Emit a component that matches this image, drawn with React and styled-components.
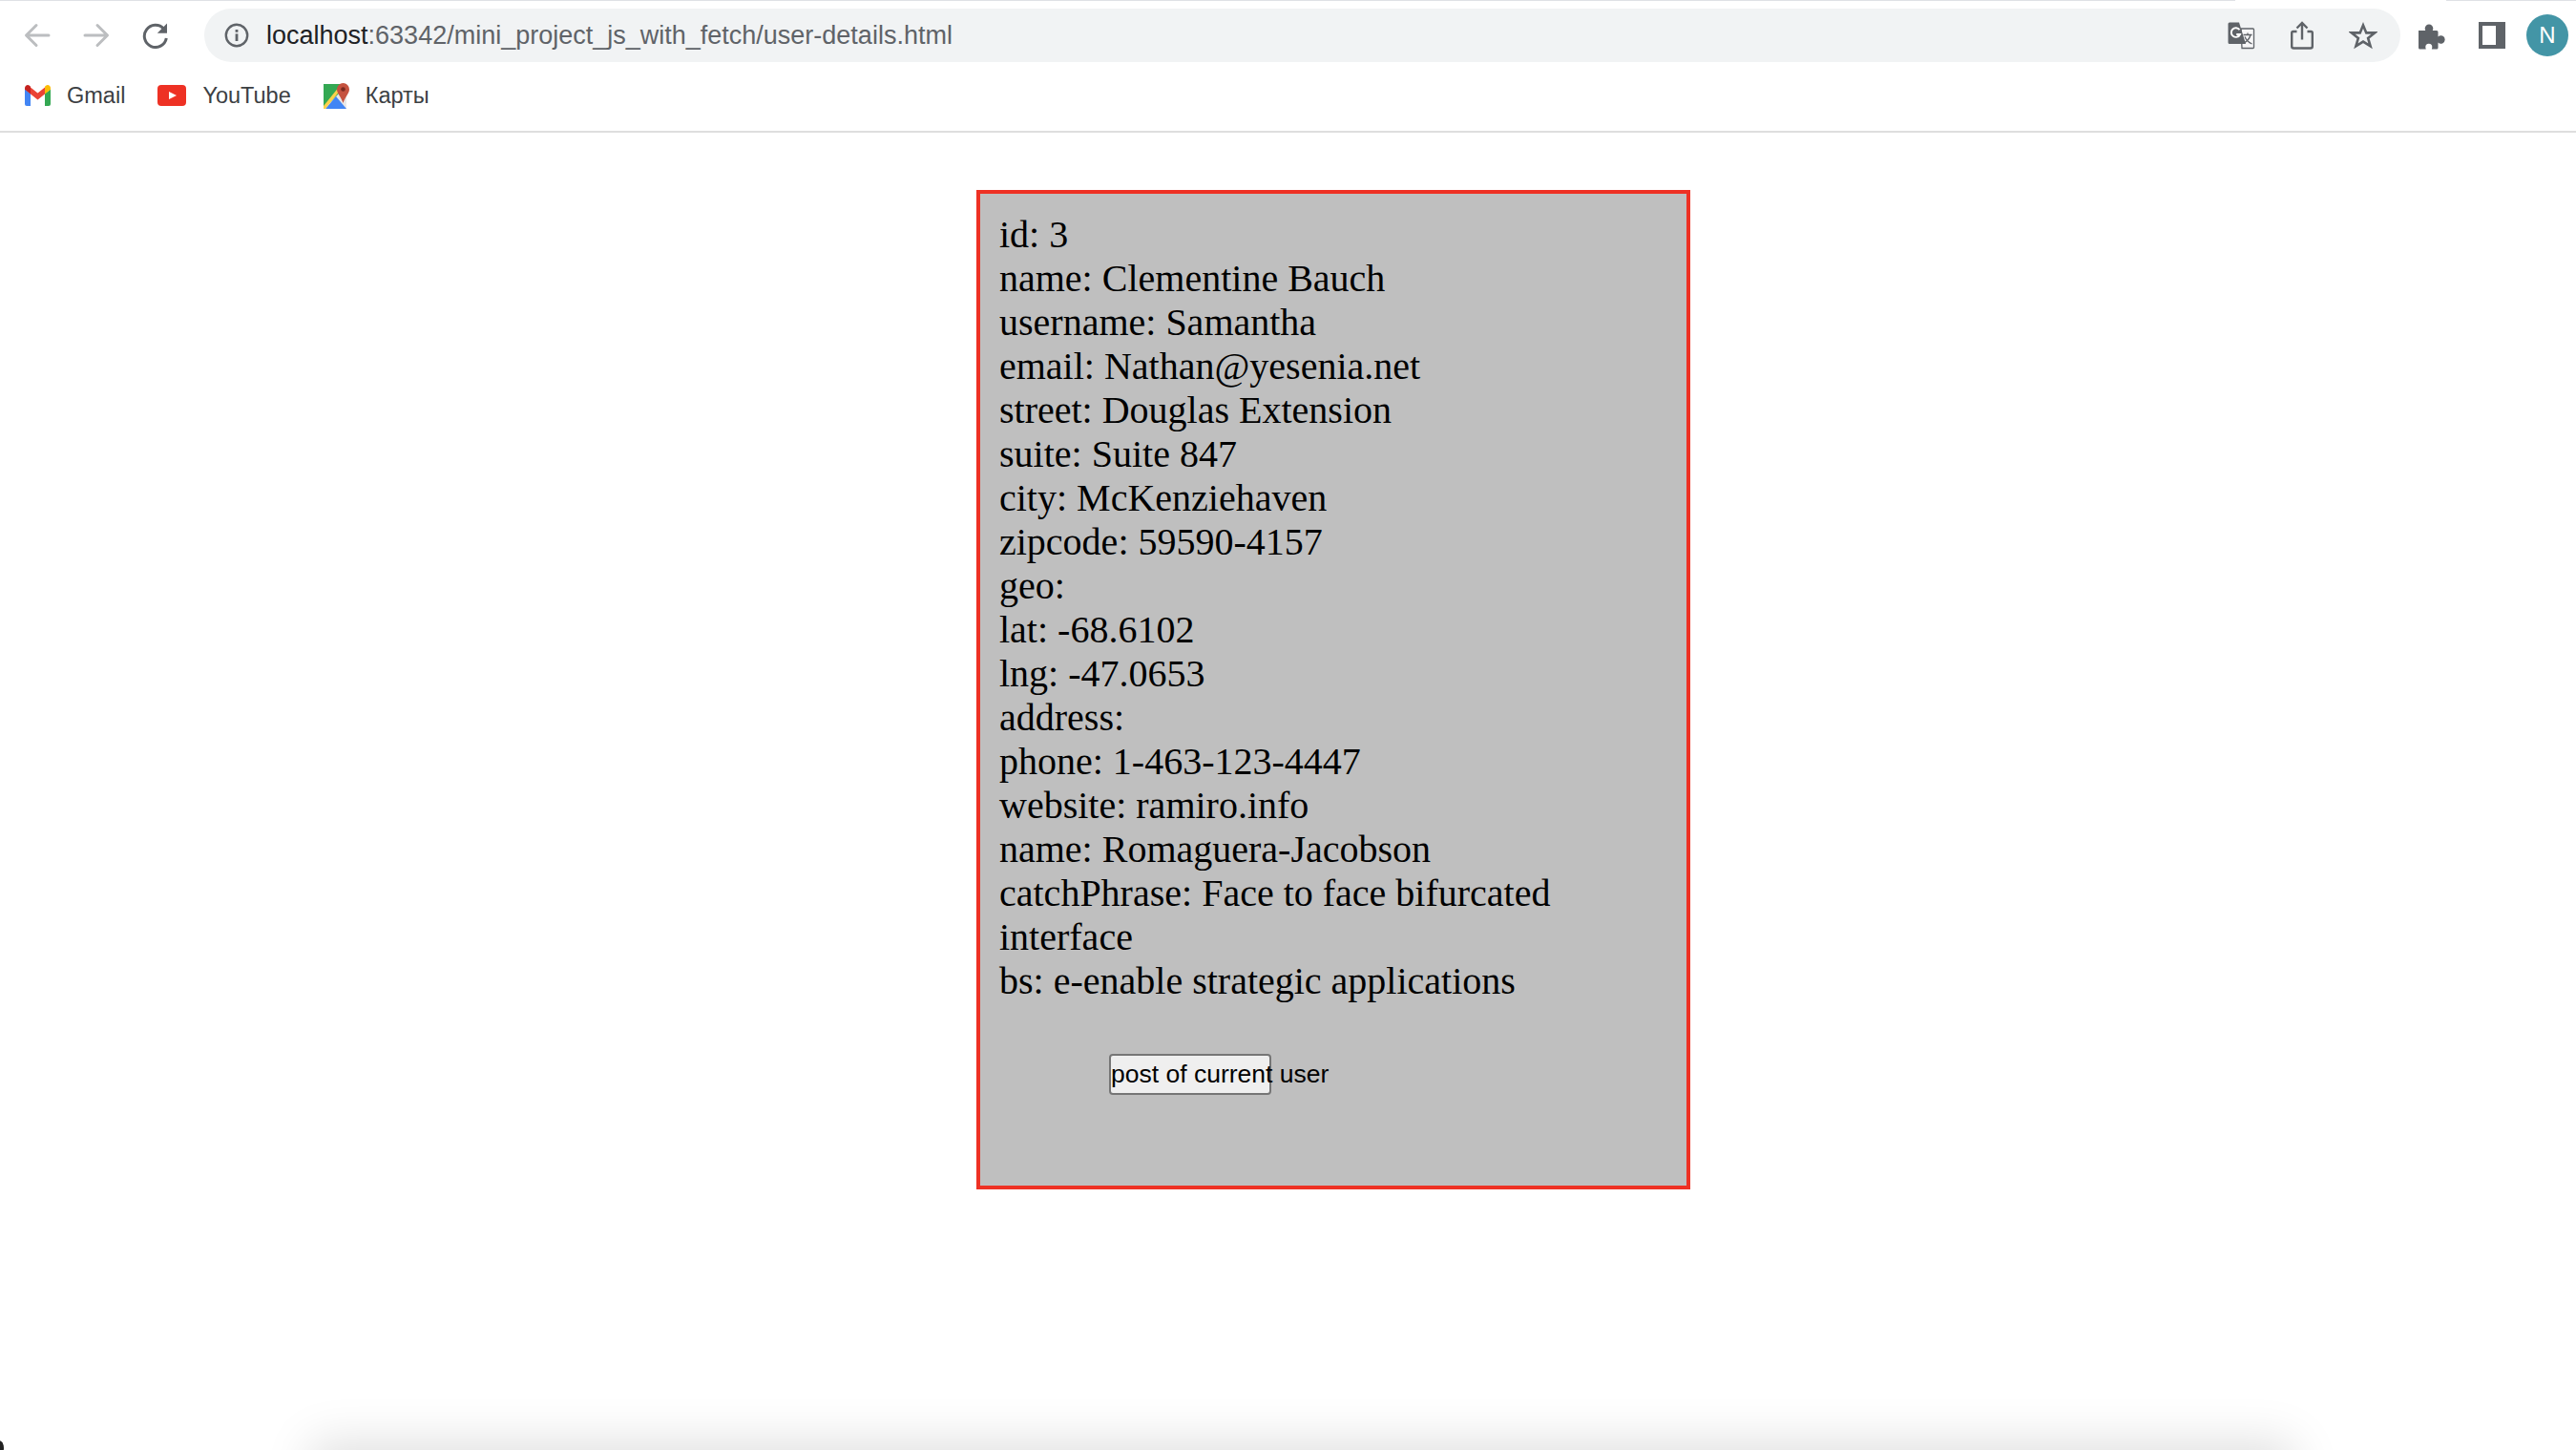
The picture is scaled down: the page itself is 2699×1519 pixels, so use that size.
import React from "react";
import styled, { createGlobalStyle } from "styled-components";

const GlobalStyle = createGlobalStyle`
    html, body {
        margin: 0;
        padding: 0;
        height: 100%;
        overflow: hidden;
        background: #ffffff;
    }
`;

const Page = styled.div`
    position: relative;
    height: 1519px;
    overflow: hidden;
`;

const Chrome = styled.header`
    height: 137px;
    border-bottom: 2px solid #dedede;
    background: #ffffff;
    position: relative;
`;

const TabEdge = styled.div`
    position: absolute;
    top: 0;
    left: ${(p) => p.$left}px;
    width: ${(p) => p.$width}px;
    height: 1px;
    background: #dfe1e5;
`;

const Toolbar = styled.div`
    height: 74px;
    padding: 9px 0 0 0;
    box-sizing: border-box;
    display: flex;
    align-items: flex-start;
`;

const NavButton = styled.div`
    width: ${(p) => p.$width || 60}px;
    height: 56px;
    display: flex;
    align-items: center;
    justify-content: center;
    flex-shrink: 0;
`;

const NavGroup = styled.div`
    display: flex;
    padding-left: 9px;
    width: 200px;
    box-sizing: border-box;
    margin-right: 14px;
    flex-shrink: 0;
`;

const Omnibox = styled.div`
    width: 2301px;
    height: 56px;
    flex-shrink: 0;
    background: #f1f3f4;
    border-radius: 28px;
    display: flex;
    align-items: center;
    padding: 0 7px 0 21px;
    box-sizing: border-box;
`;

const Url = styled.div`
    margin-left: 18px;
    font-family: "Liberation Sans", Arial, sans-serif;
    font-size: 27px;
    color: #202124;
    flex: 1;
    white-space: nowrap;
`;

const UrlRest = styled.span`
    color: #5f6368;
`;

const OmniAction = styled.div`
    width: 64px;
    display: flex;
    justify-content: center;
    flex-shrink: 0;
`;

const ExtButtons = styled.div`
    display: flex;
    margin-left: 0;
    flex-shrink: 0;
`;

const Avatar = styled.div`
    width: 44px;
    height: 44px;
    border-radius: 50%;
    background: #4395a6;
    color: #ffffff;
    font-family: "Liberation Sans", Arial, sans-serif;
    font-size: 24px;
    display: flex;
    align-items: center;
    justify-content: center;
    flex-shrink: 0;
    margin: 6px 0 0 4px;
`;

const Bookmarks = styled.nav`
    display: flex;
    align-items: center;
    height: 52px;
    padding-left: 26px;
`;

const Bookmark = styled.div`
    display: flex;
    align-items: center;
    gap: 17px;
    margin-right: 34px;
    font-family: "Liberation Sans", Arial, sans-serif;
    font-size: 23.5px;
    color: #3c4043;
`;

const Card = styled.main`
    box-sizing: border-box;
    width: 748px;
    height: 1047px;
    margin: 60px 0 0 1023px;
    padding: 20px;
    border: 4px solid #ee3124;
    background: #bfbfbf;
`;

const Details = styled.div`
    font-family: "Liberation Serif", "Times New Roman", serif;
    font-size: 40px;
    line-height: 46px;
    color: #000000;
`;

const Line = styled.div``;

const ButtonRow = styled.div`
    margin: 53px 0 0 115px;
`;

const PostButton = styled.button`
    width: 170px;
    height: 43px;
    padding: 0;
    box-sizing: border-box;
    background: #efefef;
    border: 2px solid #767676;
    border-radius: 4px;
    font-family: "Liberation Sans", Arial, sans-serif;
    font-size: 26.5px;
    color: #000000;
    white-space: nowrap;
`;

const DockShadow = styled.div`
    position: absolute;
    left: 340px;
    right: 310px;
    top: 1525px;
    height: 60px;
    background: #d8d8d8;
    box-shadow: 0 0 50px 14px rgba(0, 0, 0, 0.13);
`;

const CornerMark = styled.div`
    position: absolute;
    left: -6px;
    bottom: -6px;
    width: 10px;
    height: 16px;
    border-radius: 50%;
    background: #222222;
`;

const iconColor = "#5f6368";

function ArrowLeft() {
    return (
        <svg width="28" height="28" viewBox="0 0 28 28" fill="none" stroke="#bcbec0" strokeWidth="3" strokeLinecap="round" strokeLinejoin="round">
            <path d="M26 14H3M13 3.5L2.5 14 13 24.5" />
        </svg>
    );
}

function ArrowRight() {
    return (
        <svg width="28" height="28" viewBox="0 0 28 28" fill="none" stroke="#bcbec0" strokeWidth="3" strokeLinecap="round" strokeLinejoin="round">
            <path d="M2 14h23M15 3.5L25.5 14 15 24.5" />
        </svg>
    );
}

function Reload() {
    return (
        <svg width="28" height="28" viewBox="0 0 28 28" fill="none">
            <path d="M22.6 7.2A11.6 11.6 0 1 0 25.3 17" stroke={iconColor} strokeWidth="3" />
            <path d="M26 1.5V11.8H15.8z" fill={iconColor} />
        </svg>
    );
}

function InfoCircle() {
    return (
        <svg width="26" height="26" viewBox="0 0 26 26" fill="none">
            <circle cx="13" cy="13" r="11.2" stroke={iconColor} strokeWidth="2.4" />
            <rect x="11.6" y="11.4" width="2.8" height="7.6" fill={iconColor} />
            <rect x="11.6" y="7" width="2.8" height="2.8" fill={iconColor} />
        </svg>
    );
}

function TranslateIcon() {
    return (
        <svg width="29" height="29" viewBox="0 0 29 29" fill="none">
            <path d="M14 7h12.5a1 1 0 0 1 1 1v18.5a1 1 0 0 1-1 1H15z" fill="#f7f7f8" stroke={iconColor} strokeWidth="1.3" />
            <path d="M2 0.5h10L19 23H2a1.5 1.5 0 0 1-1.5-1.5V2A1.5 1.5 0 0 1 2 0.5z" fill={iconColor} />
            <path d="M12.5 8.3A4.8 4.8 0 1 0 13 13H9.2" stroke="#ffffff" strokeWidth="1.9" />
            <path d="M16.5 13.5h9M21 11.5v2M24 13.5c-1 4-4 7-7.5 9M18 15.5c1.2 3 4 6 7.5 7.5" stroke={iconColor} strokeWidth="1.3" />
        </svg>
    );
}

function ShareIcon() {
    return (
        <svg width="24" height="30" viewBox="0 0 24 30" fill="none" stroke={iconColor} strokeWidth="2.4">
            <path d="M6.5 11H2.8a1.6 1.6 0 0 0-1.6 1.6v13.9A2 2 0 0 0 3.2 28.500h17.600a2 2 0 0 0 2-2V12.600a1.600 1.600 0 0 0-1.600-1.600H17.500" />
            <path d="M12 19.500V2.500M6.500 7.500L12 2l5.500 5.500" />
        </svg>
    );
}

function StarIcon() {
    return (
        <svg width="30" height="29" viewBox="0 0 30 29" fill="none" stroke={iconColor} strokeWidth="2.6" strokeLinejoin="miter">
            <path d="M15 3.400l3.300 8h8.700l-6.900 5.500 2.500 8.500L15 20.600l-7.600 4.800 2.500-8.500L3 11.400h8.700z" />
        </svg>
    );
}

function PuzzleIcon() {
    return (
        <svg width="29" height="29" viewBox="0 0 29 29">
            <path
                d="M1 9h7.300a4.300 4.300 0 0 1-.6-2.300 4.300 4.300 0 0 1 8.600 0c0 .8-.2 1.600-.6 2.300H20a1.500 1.500 0 0 1 1.500 1.500v5a4.200 4.200 0 0 1 7.200 3 4.200 4.200 0 0 1-7.200 3V27a1.500 1.500 0 0 1-1.500 1.500h-5.200c.3-.8.500-1.400.500-2.200a3.500 3.500 0 0 0-7 0c0 .8.200 1.400.5 2.200H2.500A1.500 1.500 0 0 1 1 27z"
                fill={iconColor}
            />
        </svg>
    );
}

function SidePanelIcon() {
    return (
        <svg width="28" height="28" viewBox="0 0 28 28">
            <path d="M0 0h28v28H0zM4 4v20h14V4z" fill={iconColor} fillRule="evenodd" />
        </svg>
    );
}

function GmailIcon() {
    return (
        <svg width="27" height="22" viewBox="0 0 27 22">
            <path d="M0 4.500V20a2 2 0 0 0 2 2h4V9z" fill="#4285f4" />
            <path d="M27 4.500V20a2 2 0 0 1-2 2h-4V9z" fill="#34a853" />
            <path d="M6 2.500L13.500 8.500 21 2.500v7L13.500 15.500 6 9.500z" fill="#ea4335" />
            <path d="M0 3.500C0 .5 3 -.8 5 .8L6 1.700V9.500L0 4.800z" fill="#c5221f" />
            <path d="M27 3.500C27 .5 24 -.8 22 .8L21 1.700V9.500L27 4.800z" fill="#fbbc04" />
        </svg>
    );
}

function YoutubeIcon() {
    return (
        <svg width="30" height="22" viewBox="0 0 30 22">
            <rect width="30" height="22" rx="4" fill="#ee3124" />
            <path d="M12 7l8 4-8 4z" fill="#ffffff" />
        </svg>
    );
}

function MapsIcon() {
    return (
        <svg width="27" height="30" viewBox="0 0 27 30">
            <rect x="0" y="3" width="24" height="26" fill="#34a853" />
            <path d="M0 29L24 5v24z" fill="#e8e8e8" />
            <path d="M2 29L13 16l11 13z" fill="#4285f4" />
            <path d="M0 29v-3L17 5h4L2 29z" fill="#fbd14b" />
            <path d="M14 8.500a6.500 6.500 0 0 1 13 0c0 4.500-4.500 8-6.500 14.500C18.500 16.500 14 13 14 8.500z" fill="#c5523f" />
            <circle cx="20.500" cy="8.500" r="2.300" fill="#7a2a20" />
        </svg>
    );
}

const userLines = [
    "id: 3",
    "name: Clementine Bauch",
    "username: Samantha",
    "email: Nathan@yesenia.net",
    "street: Douglas Extension",
    "suite: Suite 847",
    "city: McKenziehaven",
    "zipcode: 59590-4157",
    "geo:",
    "lat: -68.6102",
    "lng: -47.0653",
    "address:",
    "phone: 1-463-123-4447",
    "website: ramiro.info",
    "name: Romaguera-Jacobson",
    "catchPhrase: Face to face bifurcated interface",
    "bs: e-enable strategic applications",
];

function App() {
    return (
        <Page>
            <GlobalStyle />
            <Chrome>
                <TabEdge $left={0} $width={2342} />
                <TabEdge $left={2563} $width={136} />
                <Toolbar>
                    <NavGroup>
                        <NavButton><ArrowLeft /></NavButton>
                        <NavButton $width={64}><ArrowRight /></NavButton>
                        <NavButton><Reload /></NavButton>
                    </NavGroup>
                    <Omnibox>
                        <InfoCircle />
                        <Url>
                            localhost<UrlRest>:63342/mini_project_js_with_fetch/user-details.html</UrlRest>
                        </Url>
                        <OmniAction><TranslateIcon /></OmniAction>
                        <OmniAction><ShareIcon /></OmniAction>
                        <OmniAction><StarIcon /></OmniAction>
                    </Omnibox>
                    <ExtButtons>
                        <NavButton $width={64}><PuzzleIcon /></NavButton>
                        <NavButton $width={64}><SidePanelIcon /></NavButton>
                    </ExtButtons>
                    <Avatar>N</Avatar>
                </Toolbar>
                <Bookmarks>
                    <Bookmark><GmailIcon />Gmail</Bookmark>
                    <Bookmark><YoutubeIcon />YouTube</Bookmark>
                    <Bookmark><MapsIcon />Карты</Bookmark>
                </Bookmarks>
            </Chrome>
            <Card>
                <Details>
                    {userLines.map((line, i) => (
                        <Line key={i}>{line}</Line>
                    ))}
                </Details>
                <ButtonRow>
                    <PostButton>post of current user</PostButton>
                </ButtonRow>
            </Card>
            <DockShadow />
            <CornerMark />
        </Page>
    );
}

export default App;
